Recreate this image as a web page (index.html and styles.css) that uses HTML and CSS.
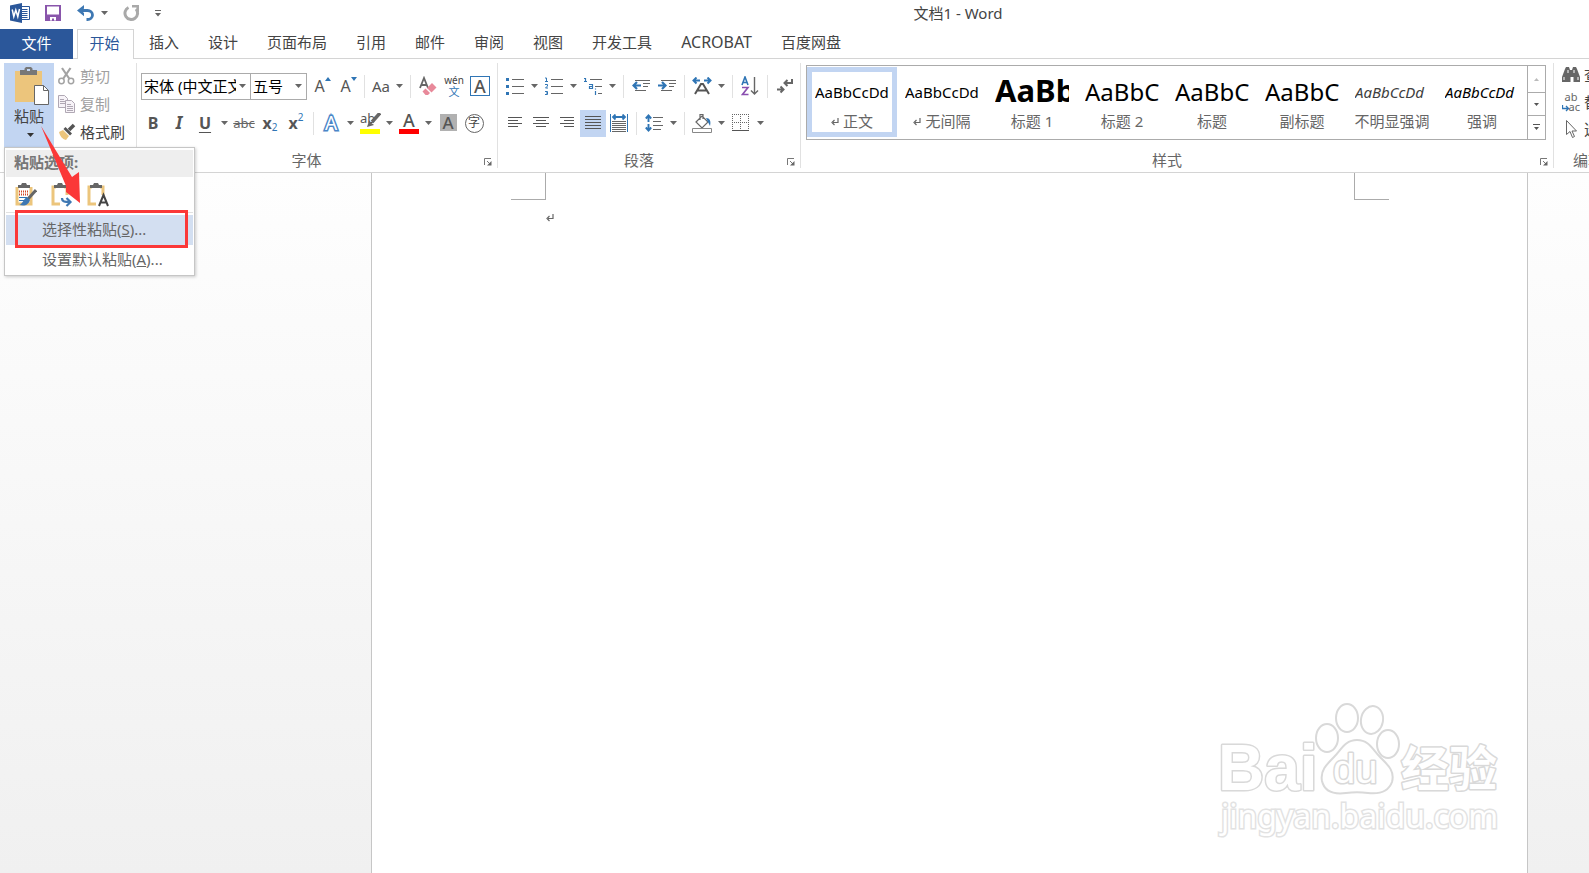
FILE: index.html
```html
<!DOCTYPE html>
<html lang="zh-CN">
<head>
<meta charset="utf-8">
<title>文档1 - Word</title>
<link rel="stylesheet" href="styles.css">
</head>
<body>
<svg class="defs" aria-hidden="true">
  <symbol id="caret" viewBox="0 0 7 4"><path d="M0 0h7L3.500 4z" fill="currentColor"/></symbol>
  <symbol id="launch" viewBox="0 0 8 8"><path d="M.5 7V.5H7M3 3l4 4" fill="none" stroke="#777"/><path d="M7.500 3v4.500H3z" fill="#666"/></symbol>
  <symbol id="ret" viewBox="0 0 8 9"><path d="M7 1v4.500H2M3.500 3L1 5.500 3.500 8" fill="none" stroke="#666" stroke-width="1.200"/></symbol>
</svg>

<header class="titlebar">
  <div class="quick">
    <svg class="q-word" width="20" height="20" viewBox="0 0 20 20"><path d="M11 3.500h8.500v13H11" fill="#fff" stroke="#2b579a"/><path d="M12 6.500h5.500M12 8.500h5.500M12 10.500h5.500M12 12.500h5.500M12 14.500h5.500" stroke="#2b579a"/><path d="M0 2.500L12 0v20L0 17.500z" fill="#2b579a"/><path d="M2.200 6.500l1.600 7 2-6.500 2 6.500 1.700-7.500" fill="none" stroke="#fff" stroke-width="1.500"/></svg>
    <button class="q-save" aria-label="保存"><svg width="16" height="16" viewBox="0 0 16 16"><path d="M0 0h16v16H0z" fill="#8955ab"/><path d="M2 1.500h12v8H2zM4 11h8v4H4z" fill="#fff"/><path d="M4 11h8v5H4z" fill="#8955ab"/><path d="M5 12h6v3.500H9V13.500H7v2H5z" fill="#fff"/></svg></button>
    <button class="q-undo" aria-label="撤消"><svg width="19" height="16" viewBox="0 0 19 16"><path d="M3 5.500h7.500a5 4.500 0 0 1 0 9H9.500" fill="none" stroke="#3e78b3" stroke-width="2.800"/><path d="M0 5.500L7 0v3.500L4.500 5.500 7 8v3.300z" fill="#3e78b3"/></svg></button>
    <button class="q-caret" aria-label="撤消列表"><svg class="caret"><use href="#caret"/></svg></button>
    <button class="q-redo" aria-label="重复"><svg width="17" height="17" viewBox="0 0 17 17"><path d="M5.500 2.500A6.300 6.300 0 1 0 13 4" fill="none" stroke="#a9a9a9" stroke-width="3"/><path d="M9 0h7v7h-2.500V2.500H9z" fill="#a9a9a9"/></svg></button>
    <button class="q-more" aria-label="自定义快速访问工具栏"><svg width="6" height="7" viewBox="0 0 6 7"><path d="M0 0h6v1H0zM0 3h6L3 6.500z" fill="#666"/></svg></button>
  </div>
  <h1 class="title">文档1 - Word</h1>
</header>

<nav class="tabs">
  <button class="tab file">文件</button>
  <button class="tab active">开始</button>
  <button class="tab">插入</button>
  <button class="tab">设计</button>
  <button class="tab">页面布局</button>
  <button class="tab">引用</button>
  <button class="tab">邮件</button>
  <button class="tab">审阅</button>
  <button class="tab">视图</button>
  <button class="tab">开发工具</button>
  <button class="tab latin">ACROBAT</button>
  <button class="tab">百度网盘</button>
</nav>

<div class="ribbon">
  <section class="group clipboard">
    <button class="paste">
      <svg width="34" height="38" viewBox="0 0 34 38"><path d="M0 4h27v31H0z" fill="#ecc57c"/><path d="M5 8V3h4.500V1.500L11 0h5l1.500 1.500V3H22v5z" fill="#777"/><path d="M12 2h3v2h-3z" fill="#c2d5f2"/><path d="M19.500 18.500h9l5 5v14h-14z" fill="#fff" stroke="#666"/><path d="M28.500 18.500v5h5" fill="none" stroke="#666"/></svg>
      <span>粘贴</span>
      <svg class="caret"><use href="#caret"/></svg>
    </button>
    <div class="clip-list">
      <button class="clip off"><svg width="18" height="18" viewBox="0 0 18 18"><g fill="none" stroke="#a3a3a3" stroke-width="1.500"><circle cx="3.500" cy="14" r="2.700"/><circle cx="13" cy="14" r="2.700"/><path d="M5 12L12.500 1M11.500 12L4 1" stroke-width="2.200"/></g></svg>剪切</button>
      <button class="clip off"><svg width="18" height="18" viewBox="0 0 18 18"><g fill="#f7f3f8" stroke="#b0a8b4"><path d="M.5.500h6l3 3v9h-9z"/><path d="M2 4.500h4M2 6.500h6M2 8.500h6"/><path d="M7.500 5.500h6l3 3v9h-9z"/><path d="M9 9.500h4M9 11.500h6M9 13.500h6M9 15.500h6"/></g></svg>复制</button>
      <button class="clip"><svg width="18" height="18" viewBox="0 0 18 18"><path d="M1 9l4-2 6 6-3 4c-4-1-6-4-7-8z" fill="#ecc57c"/><path d="M5.500 6l2-2 6.500 6.500-2 2z" fill="#555"/><path d="M11 7l5-5" stroke="#555" stroke-width="3.500"/></svg>格式刷</button>
    </div>
  </section>

  <section class="group font">
    <div class="row">
      <label class="combo wide"><select aria-label="字体"><option>宋体 (中文正文)</option></select><svg class="caret"><use href="#caret"/></svg></label>
      <label class="combo"><select aria-label="字号"><option>五号</option></select><svg class="caret"><use href="#caret"/></svg></label>
      <button class="ic glyph grow" aria-label="增大字号">A<svg class="mark" width="6" height="4"><path d="M0 4l3-4 3 4z" fill="#2f75b5"/></svg></button>
      <button class="ic glyph grow" aria-label="减小字号">A<svg class="mark" width="6" height="4"><path d="M0 0h6L3 4z" fill="#2f75b5"/></svg></button>
      <i class="sep"></i>
      <button class="ic glyph aa">Aa</button><button class="dd" aria-label="更改大小写选项"><svg class="caret"><use href="#caret"/></svg></button>
      <i class="sep"></i>
      <button class="ic" aria-label="清除格式"><svg width="18" height="20" viewBox="0 0 18 20"><path d="M1 12L5 2l4 10M2.500 9h5" fill="none" stroke="#666" stroke-width="1.800"/><path d="M8 12l5-5 4.500 4.500-5 5z" fill="#e8899a"/><path d="M3.500 15.500l3-3L11 17l-2 2H6.500z" fill="#e8899a"/></svg></button>
      <button class="ic wen"><span>wén</span><span class="blue">文</span></button>
      <button class="ic glyph" aria-label="字符边框"><span class="boxed">A</span></button>
    </div>
    <div class="row">
      <button class="ic glyph bold">B</button>
      <button class="ic glyph ital">I</button>
      <button class="ic glyph und">U</button><button class="dd" aria-label="下划线选项"><svg class="caret"><use href="#caret"/></svg></button>
      <button class="ic strike">abc</button>
      <button class="ic glyph script"><span>x</span><sub>2</sub></button>
      <button class="ic glyph script"><span>x</span><sup>2</sup></button>
      <i class="sep"></i>
      <button class="ic glyph fx" aria-label="文本效果">A</button><button class="dd" aria-label="文本效果选项"><svg class="caret"><use href="#caret"/></svg></button>
      <button class="ic glyph hl" aria-label="突出显示"><span>ab</span><svg class="pen" width="16" height="14" viewBox="0 0 16 14"><path d="M15 0L7 9" stroke="#666" stroke-width="3.500"/><path d="M4 8l5 4-7 2z" fill="#666"/></svg></button><button class="dd" aria-label="突出显示颜色"><svg class="caret"><use href="#caret"/></svg></button>
      <button class="ic glyph color" aria-label="字体颜色"><span>A</span></button><button class="dd" aria-label="字体颜色选项"><svg class="caret"><use href="#caret"/></svg></button>
      <button class="ic glyph" aria-label="字符底纹"><span class="shade">A</span></button>
      <button class="ic" aria-label="带圈字符"><span class="circled">字</span></button>
    </div>
    <footer class="label">字体<button class="launch" aria-label="字体设置"><svg width="8" height="8"><use href="#launch"/></svg></button></footer>
  </section>

  <section class="group para">
    <div class="row">
      <button class="ic" aria-label="项目符号"><svg width="18" height="18" viewBox="0 0 18 18"><path d="M6 2.500h12M6 9.500h12M6 16.500h12" stroke="#666"/><path d="M0 1h3v3H0zM0 8h3v3H0zM0 15h3v3H0z" fill="#2f75b5"/></svg></button><button class="dd" aria-label="项目符号选项"><svg class="caret"><use href="#caret"/></svg></button>
      <button class="ic" aria-label="编号"><svg width="18" height="18" viewBox="0 0 18 18"><path d="M6 2.500h12M6 9.500h12M6 16.500h12" stroke="#666"/><path d="M0 1h1.500v3.500M0 4.500h3M0 7.500h2.500V9L.5 11H3M0 14.500h2.500v3H0M1 16h1.500" fill="none" stroke="#2f75b5"/></svg></button><button class="dd" aria-label="编号选项"><svg class="caret"><use href="#caret"/></svg></button>
      <button class="ic" aria-label="多级列表"><svg width="18" height="18" viewBox="0 0 18 18"><path d="M6 2.500h12M11 9.500h7M14 16.500h4" stroke="#666"/><path d="M0 1.500h1.500V5M0 4.500h3M5 7.500h3.500v4H5.500V9.500h3M11.500 11.500v1M11.500 14v4" fill="none" stroke="#2f75b5" stroke-width="1.200"/></svg></button><button class="dd" aria-label="多级列表选项"><svg class="caret"><use href="#caret"/></svg></button>
      <i class="sep"></i>
      <button class="ic" aria-label="减少缩进量"><svg width="18" height="12" viewBox="0 0 18 12"><path d="M3 .5h15M11 3.500h7M11 6.500h5M3 10.500h11" stroke="#666"/><path d="M9 5.500H3M5 2L1.500 5.500 5 9" fill="none" stroke="#2f75b5" stroke-width="2.200"/></svg></button>
      <button class="ic" aria-label="增加缩进量"><svg width="18" height="12" viewBox="0 0 18 12"><path d="M3 .5h15M11 3.500h7M11 6.500h5M3 10.500h11" stroke="#666"/><path d="M0 5.500h6M4 2l3.500 3.500L4 9" fill="none" stroke="#2f75b5" stroke-width="2.200"/></svg></button>
      <i class="sep"></i>
      <button class="ic" aria-label="中文版式"><svg width="20" height="18" viewBox="0 0 20 18"><path d="M3 17L9 7h2l6 10M5.500 13.500h9" fill="none" stroke="#555" stroke-width="2"/><path d="M8 3.500H2M4.500.500l-3 3 3 3M12 3.500h6M15.500.500l3 3-3 3" fill="none" stroke="#2f75b5" stroke-width="2"/></svg></button><button class="dd" aria-label="中文版式选项"><svg class="caret"><use href="#caret"/></svg></button>
      <i class="sep"></i>
      <button class="ic" aria-label="排序"><svg width="18" height="20" viewBox="0 0 18 20"><path d="M1 9l3-8 3 8M2 6.500h4" fill="none" stroke="#2f75b5" stroke-width="1.600"/><path d="M1 11.500h6L1.500 18.500H7.500" fill="none" stroke="#8a4fb0" stroke-width="1.600"/><path d="M13.500 1v17M10 14.500l3.500 3.500 3.500-3.500" fill="none" stroke="#666" stroke-width="1.400"/></svg></button>
      <i class="sep"></i>
      <button class="ic" aria-label="显示编辑标记"><svg width="18" height="16" viewBox="0 0 18 16"><path d="M16 1v4H9M11.500 2L8.500 5l3 3M1 11.500h6M4.500 8.500l3 3-3 3" fill="none" stroke="#666" stroke-width="2"/></svg></button>
    </div>
    <div class="row">
      <button class="ic" aria-label="左对齐"><svg width="16" height="12" viewBox="0 0 16 12"><path d="M1 .5h14M1 3.500h10M1 6.500h14M1 9.500h10" stroke="#555"/></svg></button>
      <button class="ic" aria-label="居中"><svg width="16" height="12" viewBox="0 0 16 12"><path d="M0 .5h16M3 3.500h10M0 6.500h16M3 9.500h10" stroke="#555"/></svg></button>
      <button class="ic" aria-label="右对齐"><svg width="16" height="12" viewBox="0 0 16 12"><path d="M1 .5h14M5 3.500h10M1 6.500h14M5 9.500h10" stroke="#555"/></svg></button>
      <button class="ic on" aria-label="两端对齐"><svg width="16" height="14" viewBox="0 0 16 14"><path d="M0 .5h16M0 3.500h16M0 6.500h16M0 9.500h16M0 12.500h16" stroke="#555"/></svg></button>
      <button class="ic" aria-label="分散对齐"><svg width="18" height="18" viewBox="0 0 18 18"><path d="M.5 0v18M17.500 0v18" stroke="#2f75b5"/><path d="M3 3h12M5.500.500L3 3l2.500 2.500M12.500.500L15 3l-2.500 2.500" fill="none" stroke="#2f75b5" stroke-width="1.800"/><path d="M2 7.500h14M2 9.500h14M2 11.500h14M2 13.500h14M2 15.500h14M2 17.500h14" stroke="#666"/></svg></button>
      <i class="sep"></i>
      <button class="ic" aria-label="行距"><svg width="18" height="18" viewBox="0 0 18 18"><path d="M8 3.500h10M8 7.500h8M8 11.500h10M8 15.500h8" stroke="#666"/><path d="M3.500 8V2M.800 4.500l2.700-3 2.700 3M3.500 10v6M.800 13.500l2.700 3 2.700-3" fill="none" stroke="#2f75b5" stroke-width="1.900"/></svg></button><button class="dd" aria-label="行距选项"><svg class="caret"><use href="#caret"/></svg></button>
      <i class="sep"></i>
      <button class="ic" aria-label="底纹"><svg width="20" height="20" viewBox="0 0 20 20"><path d="M4 9l6-6 6 6-6 6zM8 7V1.500h3V6" fill="#fff" stroke="#666" stroke-width="1.200"/><path d="M14 5c4 0 5 3 4 8l-2-4z" fill="#2f75b5"/><path d="M.5 15.500h19v4H.5z" fill="#fff" stroke="#888"/></svg></button><button class="dd" aria-label="底纹选项"><svg class="caret"><use href="#caret"/></svg></button>
      <button class="ic" aria-label="边框"><svg width="18" height="18" viewBox="0 0 18 18"><path d="M.5 0v16M8.500 0v16M16.500 0v16M0 .5h17M0 8.500h17" stroke="#666" stroke-dasharray="1 1"/><path d="M0 16.500h17" stroke="#555"/></svg></button><button class="dd" aria-label="边框选项"><svg class="caret"><use href="#caret"/></svg></button>
    </div>
    <footer class="label">段落<button class="launch" aria-label="段落设置"><svg width="8" height="8"><use href="#launch"/></svg></button></footer>
  </section>

  <section class="group styles">
    <div class="gallery">
      <div class="cards">
        <button class="card picked"><span class="sample">AaBbCcDd</span><span class="name"><svg width="8" height="9"><use href="#ret"/></svg> 正文</span></button>
        <button class="card"><span class="sample">AaBbCcDd</span><span class="name"><svg width="8" height="9"><use href="#ret"/></svg> 无间隔</span></button>
        <button class="card"><span class="sample h1">AaBb</span><span class="name">标题 1</span></button>
        <button class="card"><span class="sample h2">AaBbC</span><span class="name">标题 2</span></button>
        <button class="card"><span class="sample h2">AaBbC</span><span class="name">标题</span></button>
        <button class="card"><span class="sample h2">AaBbC</span><span class="name">副标题</span></button>
        <button class="card"><span class="sample em soft">AaBbCcDd</span><span class="name">不明显强调</span></button>
        <button class="card"><span class="sample em">AaBbCcDd</span><span class="name">强调</span></button>
      </div>
      <div class="scroll">
        <button aria-label="上一行" disabled><svg width="5" height="3"><path d="M0 3h5L2.500 0z" fill="#bbb"/></svg></button>
        <button aria-label="下一行"><svg width="5" height="3"><path d="M0 0h5L2.500 3z" fill="#555"/></svg></button>
        <button aria-label="其他"><svg width="7" height="7"><path d="M0 0h7v1H0zM1 3h5L3.500 6z" fill="#555"/></svg></button>
      </div>
    </div>
    <footer class="label">样式<button class="launch" aria-label="样式窗格"><svg width="8" height="8"><use href="#launch"/></svg></button></footer>
  </section>

  <section class="group editing">
    <div class="clip-list">
      <button class="clip"><svg width="18" height="18" viewBox="0 0 18 18"><path d="M3 3l1-2h3l1 3h2l1-3h3l1 2 3 8v5h-6.500v-5h-3v5H0v-5z" fill="#666"/><path d="M2 11v3M16 11v3M6 4v3M12 4v3" stroke="#fff"/></svg>查找</button>
      <button class="clip"><span class="swap"><b>ab</b><b>ac</b><svg width="8" height="7" viewBox="0 0 8 7"><path d="M.5 0v3.500H6M4 1l2.500 2.500L4 6" fill="none" stroke="#2f75b5" stroke-width="1.300"/></svg></span>替换</button>
      <button class="clip"><svg width="18" height="18" viewBox="0 0 18 18"><path d="M4.500.500v14l3.500-3 2.500 6 2-1-2.500-5.500h4.500z" fill="#fff" stroke="#666"/></svg>选择</button>
    </div>
    <footer class="label">编辑</footer>
  </section>
</div>

<main class="workspace">
  <article class="sheet">
    <i class="corner left"></i>
    <i class="corner right"></i>
    <svg class="pilcrow" width="8" height="9"><use href="#ret"/></svg>
    <svg class="watermark" width="300" height="150" viewBox="0 0 300 150" role="img" aria-label="Baidu 经验">
      <g fill="#fff" stroke="#d9d9d9" stroke-width="2">
        <ellipse cx="116" cy="40" rx="11" ry="14"/>
        <ellipse cx="136" cy="20" rx="11" ry="14"/>
        <ellipse cx="161" cy="22" rx="11" ry="14" transform="rotate(10 161 22)"/>
        <ellipse cx="177" cy="46" rx="11" ry="14"/>
        <path d="M146 42c-12 0-16 10-23 17-8 8-14 14-12 24 3 13 16 13 24 12 8-1 14-1 22 0 9 1 20 0 24-11 3-11-4-17-12-25-7-7-11-17-23-17z"/>
        <g paint-order="stroke" stroke-width="3" stroke-linejoin="round">
          <text class="wm-bai" x="7" y="92">Bai</text>
          <text class="wm-du" x="122" y="85">du</text>
          <text class="wm-cn" x="190" y="88">经验</text>
        </g>
        <text class="wm-url" x="10" y="130" paint-order="stroke" stroke="#e2e2e2" stroke-width="3">jingyan.baidu.com</text>
      </g>
    </svg>
  </article>
</main>

<div class="menu" role="menu">
  <div class="menu-head">粘贴选项:</div>
  <div class="menu-icons">
    <button aria-label="保留源格式"><svg width="22" height="24" viewBox="0 0 22 24"><path d="M2 4v17h14V4" fill="#fff" stroke="#ecc57c" stroke-width="3"/><path d="M3 5V2h3l1-2h4l1 2h3v3z" fill="#666"/><path d="M4 8.500h10M4 11.500h10" stroke="#d24726" stroke-dasharray="1 1" stroke-width="2"/><path d="M4 14.500h8M4 17.500h5" stroke="#2f75b5"/><path d="M21 7l-8 9" stroke="#666" stroke-width="3"/><path d="M12 14l3 3c-2 6-6 6-11 5 4-1 4-6 8-8z" fill="#3e78b3"/></svg></button>
    <button aria-label="合并格式"><svg width="22" height="24" viewBox="0 0 22 24"><path d="M16 12V4h-3M5 4H2v17h7" fill="none" stroke="#ecc57c" stroke-width="3"/><path d="M3 5V2h3l1-2h4l1 2h3v3z" fill="#666"/><path d="M11 15c0 4 3 4 8 4M15.500 15l4 4-4 4" fill="none" stroke="#3e78b3" stroke-width="2.200"/></svg></button>
    <button aria-label="只保留文本"><svg width="22" height="24" viewBox="0 0 22 24"><path d="M16 12V4h-3M5 4H2v17h7" fill="none" stroke="#ecc57c" stroke-width="3"/><path d="M3 5V2h3l1-2h4l1 2h3v3z" fill="#666"/><path d="M12 23l4.500-11L21 23M13.500 19.500h6" fill="none" stroke="#444" stroke-width="2"/></svg></button>
  </div>
  <button class="menu-item hot" role="menuitem">选择性粘贴(<u>S</u>)...</button>
  <button class="menu-item" role="menuitem">设置默认粘贴(<u>A</u>)...</button>
  <i class="frame"></i>
</div>
<svg class="arrow" width="42" height="80" viewBox="0 0 42 80"><path d="M0 0L31 51 38 46 39 77 25 66 25 60z" fill="#fb3838"/></svg>
</body>
</html>
```

FILE: styles.css
```css
* { box-sizing: border-box; }

body {
  margin: 0;
  min-height: 100vh;
  display: flex;
  flex-direction: column;
  overflow: hidden;
  position: relative;
  background: #fff;
  color: #444;
  font: 15px/20px "Noto Sans", "Noto Sans CJK SC", sans-serif;
}

button, select {
  margin: 0;
  padding: 0;
  border: 0;
  background: none;
  color: inherit;
  font: inherit;
}

svg { display: block; flex: none; }
.defs { position: absolute; width: 0; height: 0; }
.caret { width: 7px; height: 4px; color: #666; }

/* Title bar */
.titlebar { display: flex; height: 29px; align-items: center; }
.quick { display: flex; align-items: center; width: 164px; padding: 0 0 3px 10px; }
.q-save { margin-left: 15px; }
.q-undo { margin-left: 16px; }
.q-caret { margin-left: 5px; }
.q-redo { margin-left: 15px; }
.q-more { margin-left: 15px; }
.title {
  flex: 1;
  margin: 0;
  padding: 0 0 4px 163px;
  font-size: 15px;
  font-weight: 400;
  line-height: 20px;
  text-align: center;
}

/* Tabs */
.tabs { display: flex; gap: 29px; height: 30px; border-bottom: 1px solid #d4d4d4; }
.tab { height: 29px; padding-bottom: 4px; white-space: nowrap; }
.tab.latin { font-size: 16px; }
.tab.file { width: 73px; height: 30px; padding: 0 0 2px; background: #2b579a; color: #fff; }
.tab.active {
  width: 57px;
  height: 30px;
  margin: 0 -14px 0 -25px;
  padding-right: 2px;
  border: 1px solid #d4d4d4;
  border-bottom: 0;
  background: #fff;
  color: #2b579a;
}

/* Ribbon */
.ribbon { display: flex; height: 114px; padding: 4px 0; border-bottom: 1px solid #d4d4d4; overflow: hidden; }
.group { display: flex; flex-direction: column; flex: none; gap: 10px; height: 105px; border-right: 1px solid #e1e1e1; }
.row { display: flex; height: 27px; align-items: stretch; }
.label { position: relative; margin-top: auto; height: 18px; padding-right: 24px; line-height: 20px; color: #666; text-align: center; }
.launch { position: absolute; right: 5px; bottom: 2px; }

.ic { display: flex; flex: none; width: 26px; align-items: center; justify-content: center; position: relative; padding-bottom: 1px; }
.ic.on { background: #c2d5f2; }
.dd { display: flex; flex: none; width: 13px; align-items: center; justify-content: center; padding-bottom: 2px; }
.sep { flex: none; width: 1px; margin: 2px 4px; background: #e1e1e1; }

/* Clipboard group */
.clipboard { flex-direction: row; width: 137px; gap: 0; padding-left: 4px; }
.paste {
  display: flex;
  flex-direction: column;
  align-items: center;
  width: 50px;
  height: 105px;
  padding-top: 4px;
  background: #c2d5f2;
}
.paste svg:first-child { margin-left: 6px; }
.paste span { margin: 1px 0 7px; }
.paste .caret { color: #333; margin-left: 3px; }
.clip-list { display: flex; flex-direction: column; gap: 8px; padding: 3px 0 0 4px; }
.clip { display: flex; gap: 4px; height: 20px; align-items: center; white-space: nowrap; }
.clip.off { color: #a0a0a0; }

/* Font group */
.font { width: 361px; padding: 10px 0 0 3px; }
.font .row:first-child { padding-left: 1px; }
.combo { position: relative; width: 57px; margin-right: 1px; border: 1px solid #ababab; }
.combo.wide { width: 110px; margin-right: -1px; }
.combo select {
  display: block;
  width: 100%;
  height: 25px;
  padding: 0 14px 2px 2px;
  appearance: none;
  overflow: hidden;
  text-overflow: clip;
  color: #000;
}
.combo .caret { position: absolute; right: 4px; top: 10px; }
.glyph { padding-bottom: 2px; font-size: 17px; color: #555; }
.grow { padding-right: 3px; font-size: 16px; }
.grow .mark { position: absolute; right: 3px; top: 4px; }
.aa { width: 24px; font-size: 15px; }
.wen { flex-direction: column; padding-bottom: 2px; font-size: 10px; line-height: 12px; }
.wen .blue { font-size: 11px; line-height: 12px; color: #2f75b5; }
.boxed { width: 20px; border: 1px solid #2f75b5; font-size: 18px; line-height: 18px; font-weight: 500; }
.bold { font-weight: 700; font-size: 16px; }
.ital { font: italic 700 17px "Noto Sans", sans-serif; }
.und { font-weight: 700; font-size: 16px; text-decoration: underline; text-underline-offset: 3px; }
.strike { font-size: 13px; text-decoration: line-through; color: #666; }
.script { font-weight: 700; font-size: 16px; }
.script sub, .script sup { font-size: 10px; line-height: 10px; font-weight: 400; color: #2f75b5; }
.script sub { padding-top: 8px; vertical-align: 0; }
.script sup { padding-bottom: 12px; vertical-align: 0; }
.fx { font-size: 19px; color: #fff; -webkit-text-stroke: 3px #4a86c8; paint-order: stroke fill; }
.hl span, .color span { width: 20px; height: 21px; text-align: center; }
.hl span { border-bottom: 5px solid #ff0; font-size: 13px; line-height: 10px; text-align: left; }
.hl .pen { position: absolute; right: 2px; top: 3px; }
.color span { border-bottom: 5px solid #f00; font-size: 18px; line-height: 15px; font-weight: 500; }
.hl, .color { padding-bottom: 0; }
.shade { width: 17px; background: #b1b1b1; font-size: 17px; line-height: 17px; font-weight: 500; }
.circled { width: 19px; height: 19px; border: 1px solid #666; border-radius: 50%; font-size: 12px; line-height: 16px; }

/* Paragraph group */
.para { width: 303px; padding: 10px 0 0 4px; }

/* Styles group */
.styles { flex: none; width: 753px; padding: 2px 7px 0 5px; }
.gallery { display: flex; height: 75px; border: 1px solid #ababab; }
.cards { display: flex; flex: 1; padding-top: 1px; overflow: hidden; }
.card { flex: none; display: flex; flex-direction: column; width: 90px; height: 70px; padding: 2px 3px 0; border: 5px solid transparent; }
.card.picked { border-color: #c2d5f2; }
.sample { width: 74px; height: 36px; overflow: hidden; line-height: 36px; color: #000; text-align: left; white-space: nowrap; }
.sample.h1 { font-size: 31px; line-height: 32px; font-weight: 700; }
.sample.h2 { font-size: 24px; }
.sample.em { font-style: italic; }
.sample.soft { color: #404040; }
.name { display: flex; gap: 4px; align-items: center; align-self: center; height: 22px; color: #666; white-space: nowrap; }
.scroll { display: grid; grid-template-rows: 26px 23px 24px; width: 18px; border-left: 1px solid #ababab; }
.scroll button { display: flex; align-items: center; justify-content: center; }
.scroll button + button { border-top: 1px solid #ababab; }
.styles .label { padding-right: 18px; }
.styles .launch { right: -2px; }

/* Editing group */
.editing { gap: 0; border-right: 0; padding-left: 4px; width: 64px; }
.editing .clip-list { gap: 7px; padding-top: 2px; }
.editing .label { padding-right: 0; }
.swap { position: relative; display: grid; width: 18px; font-size: 11px; line-height: 10px; color: #666; }
.swap b { font-weight: 400; }
.swap b + b { text-align: right; }
.swap svg { position: absolute; left: 0; bottom: 0; }

/* Document */
.workspace { display: flex; flex: 1; padding: 0 61px 0 371px; background: linear-gradient(#fefefe, #f0f0f0); }
.sheet { position: relative; flex: 1; border: solid #c6c6c6; border-width: 0 1px; background: #fff; }
.corner { position: absolute; top: 0; width: 35px; height: 27px; border: 0 solid #ababab; border-bottom-width: 1px; }
.corner.left { left: 139px; border-right-width: 1px; }
.corner.right { right: 138px; border-left-width: 1px; }
.pilcrow { position: absolute; left: 174px; top: 40px; }
.watermark { position: absolute; right: 16px; bottom: 25px; }
.wm-bai { font: 700 64px "Liberation Sans", sans-serif; }
.wm-du { font: 400 40px "Liberation Sans", sans-serif; }
.wm-cn { font: 700 48px "Noto Sans CJK SC", sans-serif; }
.wm-url { font: 400 32px "Noto Sans", sans-serif; }

/* Paste menu */
.menu {
  position: absolute;
  left: 4px;
  top: 147px;
  width: 191px;
  padding: 2px 1px 0;
  border: 1px solid #c6c6c6;
  background: #fff;
  box-shadow: 1px 1px 3px #0003;
  color: #666;
}
.menu-head { height: 27px; padding-left: 8px; background: #eee; color: #777; font-weight: 700; line-height: 25px; }
.menu-icons { display: flex; gap: 14px; height: 36px; padding: 6px 0 0 9px; border-bottom: 1px solid #e1e1e1; }
.menu-icons button { height: 24px; }
.menu-item { display: block; width: 100%; height: 30px; padding: 0 0 2px 36px; text-align: left; white-space: nowrap; }
.menu-item.hot { margin-top: 2px; background: #d3dff1; }
.frame { position: absolute; left: 10px; top: 62px; width: 173px; height: 38px; border: 3px solid #fb3838; }
.arrow { position: absolute; left: 41px; top: 126px; }
```
